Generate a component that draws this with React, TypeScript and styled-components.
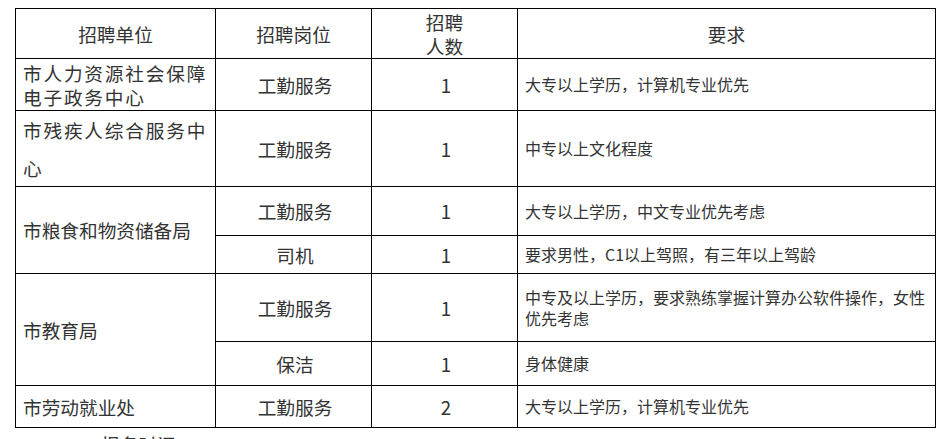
import React from "react";
import styled, { createGlobalStyle } from "styled-components";

const Global = createGlobalStyle`
  html, body { margin: 0; padding: 0; background: #fff; }
  body { font-family: "Noto Sans CJK SC", "Microsoft YaHei", sans-serif; color: #333; }
`;

const Page = styled.div`
  padding: 8px 0 0 15px;
  width: 940px;
  box-sizing: border-box;
`;

const Table = styled.table`
  border-collapse: collapse;
  table-layout: fixed;
  width: 920px;
  color: #333;
`;

const Row = styled.tr<{ $h: number }>`
  height: ${(p) => p.$h}px;
`;

const Cell = styled.td<{ $align?: "left" | "center"; $spaced?: boolean; $lh?: number }>`
  border: 1px solid #000;
  padding: 0 4px 0 7px;
  vertical-align: middle;
  text-align: ${(p) => p.$align ?? "center"};
  font-size: 18.67px;
  line-height: ${(p) => p.$lh ?? 24}px;
  letter-spacing: ${(p) => (p.$spaced ? "1.8px" : "0")};
`;

const HeadCell = styled.th`
  border: 1px solid #000;
  padding: 0;
  vertical-align: middle;
  text-align: center;
  font-weight: normal;
  font-size: 18.67px;
  line-height: 23.5px;
`;

const ReqCell = styled.td`
  border: 1px solid #000;
  padding: 0 6px 0 7px;
  vertical-align: middle;
  text-align: left;
  font-size: 16px;
  line-height: 21px;
`;

const After = styled.p`
  margin: 4px 0 0 86px;
  font-size: 18.67px;
  line-height: 24px;
  color: #333;
`;

type Sub = { post: string; n: number; req: string; h: number };
type Unit = { name: string; spaced?: boolean; lh?: number; subs: Sub[] };

const units: Unit[] = [
  {
    name: "市人力资源社会保障电子政务中心",
    spaced: true,
    subs: [{ post: "工勤服务", n: 1, req: "大专以上学历，计算机专业优先", h: 52 }],
  },
  {
    name: "市残疾人综合服务中心",
    spaced: true,
    lh: 37.5,
    subs: [{ post: "工勤服务", n: 1, req: "中专以上文化程度", h: 76 }],
  },
  {
    name: "市粮食和物资储备局",
    subs: [
      { post: "工勤服务", n: 1, req: "大专以上学历，中文专业优先考虑", h: 49 },
      { post: "司机", n: 1, req: "要求男性，C1以上驾照，有三年以上驾龄", h: 38 },
    ],
  },
  {
    name: "市教育局",
    subs: [
      {
        post: "工勤服务",
        n: 1,
        req: "中专及以上学历，要求熟练掌握计算办公软件操作，女性优先考虑",
        h: 68,
      },
      { post: "保洁", n: 1, req: "身体健康", h: 44 },
    ],
  },
  {
    name: "市劳动就业处",
    subs: [{ post: "工勤服务", n: 2, req: "大专以上学历，计算机专业优先", h: 42 }],
  },
];

export default function App() {
  return (
    <Page>
      <Global />
      <Table>
        <colgroup>
          <col style={{ width: 200 }} />
          <col style={{ width: 156 }} />
          <col style={{ width: 146 }} />
          <col style={{ width: 418 }} />
        </colgroup>
        <tbody>
          <Row $h={50}>
            <HeadCell>招聘单位</HeadCell>
            <HeadCell>招聘岗位</HeadCell>
            <HeadCell>
              招聘
              <br />
              人数
            </HeadCell>
            <HeadCell>要求</HeadCell>
          </Row>
          {units.map((u) =>
            u.subs.map((s, i) => (
              <Row $h={s.h} key={u.name + i}>
                {i === 0 && (
                  <Cell $align="left" $spaced={u.spaced} $lh={u.lh} rowSpan={u.subs.length}>
                    {u.name}
                  </Cell>
                )}
                <Cell>{s.post}</Cell>
                <Cell>{s.n}</Cell>
                <ReqCell>{s.req}</ReqCell>
              </Row>
            ))
          )}
        </tbody>
      </Table>
      <After>报名时间</After>
    </Page>
  );
}
